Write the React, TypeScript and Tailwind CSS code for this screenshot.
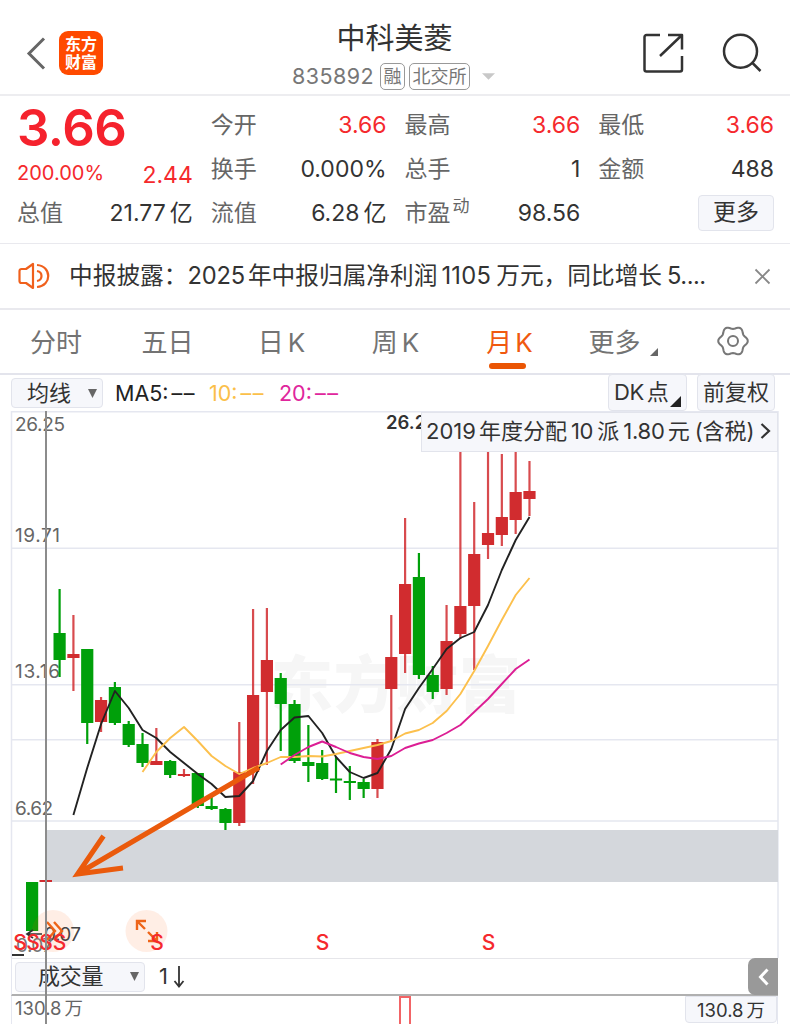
import React from "react";

type Candle = [color: "r" | "g", high: number, low: number, top: number, bottom: number];

const STEP = 13.82;
const FIRST_X = 59.6;
const xAt = (i: number) => FIRST_X + STEP * i;

const candles: Candle[] = [
  ["g", 589, 677, 633, 660],
  ["r", 615, 691, 654, 658],
  ["g", 649, 744, 649, 723],
  ["r", 697, 732, 700, 722],
  ["g", 682, 725, 687, 723],
  ["g", 721, 747, 724, 745],
  ["g", 733, 767, 744, 763],
  ["r", 728, 765, 761, 765],
  ["g", 760, 778, 761, 775],
  ["r", 769, 777, 774, 776],
  ["g", 773, 808, 773, 806],
  ["g", 795, 810, 806, 809],
  ["g", 808, 830, 809, 823],
  ["r", 722, 826, 772, 823],
  ["r", 609, 784, 695, 772],
  ["r", 608, 765, 660, 692],
  ["g", 673, 751, 678, 704],
  ["g", 700, 763, 704, 761],
  ["g", 725, 782, 762, 766],
  ["g", 750, 780, 763, 779],
  ["g", 757, 793, 778.5, 780.5],
  ["g", 766, 800, 781, 783],
  ["g", 779, 798, 782, 789],
  ["r", 739, 798, 742, 789],
  ["r", 615, 740, 657, 689],
  ["r", 518, 673, 584, 654],
  ["g", 553, 679, 577, 675],
  ["g", 666, 699, 675, 692],
  ["r", 605, 695, 641, 689],
  ["r", 440, 639, 606, 634],
  ["r", 502, 670, 554, 606],
  ["r", 440, 559, 533, 545],
  ["r", 454, 546, 517, 535],
  ["r", 440, 534, 492, 520],
  ["r", 461, 516, 491, 499],
];

const ma5 = [815, 768, 724, 691, 708, 730, 738, 752, 763, 774, 784, 797, 796, 781, 751, 730, 717.5, 716, 733, 757, 772, 778, 773, 749, 709, 688, 669, 649, 638, 632, 605, 570, 540, 517];
const ma10 = [772, 752, 738, 727, 741, 756, 766, 774, 768, 763, 757, 757, 756, 756.5, 754, 751, 748, 745, 741, 733.5, 730, 723, 711, 694, 671, 646, 620, 595, 578];
const ma20 = [764.5, 755, 747, 741.5, 747, 753, 757, 759, 756, 748, 743.5, 740, 733, 725, 712, 699, 684, 669, 659.5];

const line = (values: number[], start: number) =>
  values.map((y, i) => `${xAt(i + start).toFixed(1)},${y}`).join(" ");

const gearPath =
  Array.from({ length: 72 }, (_, i) => {
    const a = (i / 72) * Math.PI * 2;
    const r = 12.6 + 1.3 * Math.cos(6 * a);
    return `${i ? "L" : "M"}${(16 + r * Math.cos(a)).toFixed(2)} ${(16 + r * Math.sin(a)).toFixed(2)}`;
  }).join("") + "Z";

function Cell({ label, value, red, sup }: { label: string; value: React.ReactNode; red?: boolean; sup?: string }) {
  return (
    <div className="flex h-11 items-center justify-between">
      <span className="flex text-[#666]">
        {label}
        {sup && <span className="-mt-[7px] ml-0.5 text-[17px]">{sup}</span>}
      </span>
      <span className={red ? "text-[#f5292d]" : "text-[#333]"}>{value}</span>
    </div>
  );
}

function Header() {
  return (
    <header className="flex h-[96px] items-start border-b-2 border-[#ededf0]">
      <div className="flex w-[280px] items-center pt-[31px] pl-[26px]">
        <svg width="20" height="44" viewBox="0 0 20 44" fill="none" stroke="#666" strokeWidth="3">
          <path d="M18 7.500 3 22.500 18 37.500" />
        </svg>
        <div className="ml-[13px] flex size-[44px] flex-col items-center justify-center rounded-[9px] bg-[#ff4a00] text-[16px] leading-[18px] font-bold text-white">
          <span>东方</span>
          <span>财富</span>
        </div>
      </div>
      <div className="flex w-[230px] flex-col items-center">
        <h1 className="mt-[20px] -ml-[1px] text-[29px] leading-[38px] text-[#333]">中科美菱</h1>
        <div className="mt-[4px] -ml-[3px] flex h-[28px] items-center gap-[4px] text-[#777]">
          <span className="mr-[2px] text-[21.500px] tracking-[0.4px]">835892</span>
          <span className="flex h-[27px] w-[25px] items-center justify-center rounded-[5px] border-[1.500px] border-[#999] text-[18px]">融</span>
          <span className="flex h-[27px] w-[61px] items-center justify-center rounded-[5px] border-[1.500px] border-[#999] text-[18px]">北交所</span>
          <svg className="ml-[8px]" width="13" height="7" viewBox="0 0 14 7">
            <path d="M0 0h14L7 7z" fill="#c8c8c8" />
          </svg>
        </div>
      </div>
      <div className="flex flex-1 items-center justify-end gap-[36px] pt-[31px] pr-[27px]">
        <svg width="44" height="44" viewBox="0 0 44 44" fill="none" stroke="#333" strokeWidth="2.500" strokeLinejoin="round">
          <path d="M19 4H5.500a2 2 0 0 0-2 2v32.500a2 2 0 0 0 2 2H39a2 2 0 0 0 2-2V25M27 4h14v14.500M41 4 19 25" />
        </svg>
        <svg width="42" height="44" viewBox="0 0 42 44" fill="none" stroke="#333" strokeWidth="2.500">
          <circle cx="19.500" cy="20.300" r="16.500" />
          <path d="m31 31.500 8.500 8.500" />
        </svg>
      </div>
    </header>
  );
}

function Quote() {
  return (
    <section className="grid h-[147px] grid-cols-4 gap-x-[18px] pt-[7px] pr-[16px] pl-[17px] text-[23px] leading-[44px]">
      <div>
        <div className="h-11 text-[51px] leading-[50px] font-semibold tracking-[-0.5px] text-[#f5222d]">3.66</div>
        <div className="flex h-11 items-center justify-between text-[#f5292d]">
          <span className="pt-[7px] text-[20px]">200.00%</span>
          <span className="pt-[12px]">2.44</span>
        </div>
        <Cell label="总值" value={<>21.77<span className="ml-1">亿</span></>} />
      </div>
      <div>
        <Cell label="今开" value="3.66" red />
        <Cell label="换手" value="0.000%" />
        <Cell label="流值" value={<>6.28<span className="ml-1">亿</span></>} />
      </div>
      <div>
        <Cell label="最高" value="3.66" red />
        <Cell label="总手" value="1" />
        <Cell label="市盈" value="98.56" sup="动" />
      </div>
      <div>
        <Cell label="最低" value="3.66" red />
        <Cell label="金额" value="488" />
        <div className="flex h-11 items-center justify-end">
          <button className="flex h-[36px] w-[76px] items-center justify-center rounded-[4px] border border-[#e2e4ec] bg-[#f6f7fb] pb-[2px] text-[#333]">更多</button>
        </div>
      </div>
    </section>
  );
}

function Notice() {
  return (
    <section className="flex h-[67px] items-center border-t border-b-2 border-[#e9e9ee] pr-[19px] pl-[17px] text-[23.700px] text-[#333]">
      <svg width="34" height="30" viewBox="0 0 34 30" fill="none" stroke="#f0601c" strokeWidth="2.200" strokeLinejoin="round">
        <path d="M16 3v24l-7-5H4.500a2 2 0 0 1-2-2V10a2 2 0 0 1 2-2H9zM20 10c6 1 6 9 0 10M20 4c15 1 15 21 0 22" />
      </svg>
      <p className="ml-[18px] flex flex-1 whitespace-nowrap">
        <span>中报披露：</span>
        <span className="tracking-[-0.2px]">2025</span>
        <span className="ml-[3px]">年中报归属净利润</span>
        <span className="ml-[4px] tracking-[0.3px]">1105</span>
        <span className="ml-[5px]">万元，同比增长</span>
        <span className="ml-[5px] tracking-[-0.500px]">5....</span>
      </p>
      <svg width="17" height="17" viewBox="0 0 17 17" stroke="#888" strokeWidth="1.800">
        <path d="m1.500 1.500 14 14m0-14-14 14" />
      </svg>
    </section>
  );
}

function Tabs() {
  const base = "flex h-full w-[114px] items-center justify-center pr-[3px]";
  return (
    <nav className="flex h-[65px] border-b-2 border-[#e3e4ec] pt-px text-[26px] text-[#737373]">
      <div className="flex h-full w-[112px] items-center justify-center">分时</div>
      <div className={base}>五日</div>
      <div className={base}>日<span className="ml-[4px]">K</span></div>
      <div className={base}>周<span className="ml-[4px]">K</span></div>
      <div className={`${base} relative text-[#f0590f]`}>
        月<span className="ml-[3px]">K</span>
        <span className="absolute bottom-[4px] left-[35px] h-[6px] w-[37px] rounded-full bg-[#ea5504]" />
      </div>
      <div className="flex h-full w-[110px] items-center justify-center gap-[9px]">
        更多
        <svg className="mt-[19px]" width="8" height="8"><path d="M8 0v8H0z" fill="#666" /></svg>
      </div>
      <div className="flex flex-1 items-center justify-center pr-[2px] pb-[2px]">
        <svg width="34" height="34" viewBox="0 0 32 32" fill="none" stroke="#777" strokeWidth="1.900">
          <path d={gearPath} />
          <circle cx="16" cy="16" r="4.700" />
        </svg>
      </div>
    </nav>
  );
}

function Toolbar() {
  const button = "flex items-center rounded-[4px] border border-[#e2e4ec] bg-[#f6f7fb] text-[22px] text-[#333]";
  const dashes = "ml-[3px] tracking-[1.500px]";
  return (
    <section className="flex h-[36px] items-center pr-[15px] pl-[11px] text-[21.500px]">
      <div className={`${button} h-[30px] w-[92px] justify-between pr-[5px] pl-[15px]`}>
        均线
        <svg width="9" height="9"><path d="M0 0h9L4.500 9z" fill="#666" /></svg>
      </div>
      <span className="ml-[12px] flex w-[94px] text-[#222]">MA5:<span className={dashes}>––</span></span>
      <span className="flex w-[70px] text-[#fbbf4a]">10:<span className={dashes}>––</span></span>
      <span className="flex flex-1 text-[#e0269c]">20:<span className={dashes}>––</span></span>
      <div className={`${button} -mt-[1px] mr-[10px] h-[37px] w-[79px] pl-[5px]`}>
        <span className="tracking-[-0.5px]">DK</span><span className="ml-[3px]">点</span>
        <svg className="mt-[18px] ml-[1px]" width="11" height="11"><path d="M11 0v11H0z" fill="#222" /></svg>
      </div>
      <div className={`${button} -mt-[1px] h-[37px] w-[78px] justify-center`}>前复权</div>
    </section>
  );
}

const axisLabels: [string, number, number][] = [
  ["26.25", 431, 50],
  ["19.71", 542, 45],
  ["13.16", 678, 45],
  ["6.62", 815, 38],
];

function Chart() {
  return (
    <svg className="block" width="790" height="547" viewBox="0 411 790 547" fontFamily="Inter, 'Noto Sans CJK SC', sans-serif">
      <text x="271" y="708" fontSize="62" fontWeight="900" fill="#f6f6f6" textLength="250">东方财富</text>
      <g stroke="#e5e7f0" strokeWidth="1.500">
        <path d="M11.500 411v547M778 411v547M11 411.700H778M12 548.200H778M12 684.800H778M12 739.800H778M12 821H778" />
      </g>
      <rect x="46" y="830" width="732" height="52" fill="#d4d7dc" />
      {axisLabels.map(([label, y, w]) => (
        <text key={label} x="15" y={y} fontSize="19" fill="#666" textLength={w}>{label}</text>
      ))}
      <text x="386" y="429" fontSize="18.500" fontWeight="600" fill="#333">26.25</text>
      {candles.map(([color, high, low, top, bottom], i) => (
        <g key={i} fill={color === "r" ? "#d12c2f" : "#00a00a"}>
          <rect x={xAt(i) - 1.1} y={high} width="2.200" height={low - high} opacity={color === "r" ? 0.85 : 1} />
          <rect x={xAt(i) - 6.1} y={top} width="12.200" height={bottom - top} />
        </g>
      ))}
      <rect x="26" y="882" width="12.200" height="49" fill="#00a00a" />
      <rect x="39.500" y="880" width="12.500" height="2" fill="#d12c2f" />
      <g fill="none" strokeWidth="1.900" strokeLinejoin="round">
        <polyline points={line(ma5, 1)} stroke="#222" />
        <polyline points={line(ma10, 6)} stroke="#fcc04d" />
        <polyline points={line(ma20, 16)} stroke="#dc1e94" />
      </g>
      <path d="M259 767.500 79 873M103.500 836 77.500 874 123 868" fill="none" stroke="#ea5a0c" strokeWidth="5" />
      <circle cx="53" cy="931" r="21" fill="#ff5a00" opacity="0.1" />
      <circle cx="146.500" cy="931" r="21" fill="#ff5a00" opacity="0.1" />
      <path d="M27 934h15M33 930l-6 4 6 4" fill="none" stroke="#333" strokeWidth="1.700" />
      <path d="M12 955h12" stroke="#333" strokeWidth="2" />
      <text x="44" y="941" fontSize="19" fill="#444" textLength="37">0.07</text>
      <text x="16" y="952" fontSize="19" fill="#777" textLength="37">0.07</text>
      <g fill="none" stroke="#ee6418" strokeWidth="2.400">
        <path d="m47 922 8 9-8 9M54 922l8 9-8 9" />
        <path d="M137 930v-9h9M137 921l8 8M157 932v9h-9M157 941l-9-9" />
      </g>
      <g fontSize="21" fontWeight="500" fill="#f5292d" textAnchor="middle">
        {[20, 33, 46, 59.5, 157, 322.5, 488.5].map((x) => (
          <text key={x} x={x} y="949.500">S</text>
        ))}
      </g>
    </svg>
  );
}

export default function App() {
  return (
    <main className="h-[1024px] w-[790px] overflow-hidden bg-white font-['Inter','Noto_Sans_CJK_SC',sans-serif]">
      <Header />
      <Quote />
      <Notice />
      <Tabs />
      <Toolbar />
      <div className="relative h-[613px]">
        <Chart />
        <div className="absolute top-[1px] left-[421px] flex h-[40px] w-[357px] items-center border border-[#e2e4ec] bg-[#f6f7fb] pb-[2px] pl-[4px] text-[22px] whitespace-nowrap text-[#333]">
          <span>2019</span>
          <span className="ml-[3px]">年度分配</span>
          <span className="ml-[4px] tracking-[-0.3px]">10</span>
          <span className="ml-[4px]">派</span>
          <span className="ml-[4px] tracking-[-0.2px]">1.80</span>
          <span className="ml-[3px]">元</span>
          <span className="ml-[5px] tracking-[-0.1px]">(含税)</span>
          <svg className="ml-[6px]" width="11" height="18" viewBox="0 0 11 18" fill="none" stroke="#333" strokeWidth="2.200">
            <path d="m1.500 2 7.500 7-7.500 7" />
          </svg>
        </div>
        <div className="mr-[12px] ml-[11px] flex h-[38px] items-center border-t border-b-2 border-t-[#e6e6ea] border-b-[#b0b0b0] border-l border-l-[#e5e7f0]">
          <div className="ml-[3px] flex h-[30px] w-[130px] items-center justify-between rounded-[4px] border border-[#e2e4ec] bg-[#f6f7fb] pr-[5px] pl-[22px] text-[22px] text-[#333]">
            <span className="tracking-[-0.3px]">成交量</span>
            <svg width="9" height="9"><path d="M0 0h9L4.500 9z" fill="#666" /></svg>
          </div>
          <span className="ml-[14px] flex-none text-[22px] text-[#333]">1</span>
          <svg className="ml-[5px]" width="12" height="22" viewBox="0 0 12 22" fill="none" stroke="#333" strokeWidth="1.800">
            <path d="M6 0v20M1.500 15 6 20.500l4.500-5.500" />
          </svg>
          <div className="ml-auto flex h-[37px] w-[30px] items-center justify-center rounded-l-[7px] bg-[#999]">
            <svg width="11" height="18" viewBox="0 0 11 18" fill="none" stroke="#fff" strokeWidth="3">
              <path d="M9.500 1.500 2.500 9l7 7.500" />
            </svg>
          </div>
        </div>
        <div className="mr-[12px] ml-[11px] flex h-[28px] items-start border-x border-[#e5e7f0] text-[18px] leading-[24px]">
          <span className="w-[386px] pl-[3px] text-[18.500px] text-[#666]">130.8<span className="ml-[3px]">万</span></span>
          <svg width="14" height="28" fill="none" stroke="#f26466" strokeWidth="2">
            <path d="M2 30V1h10v29" />
          </svg>
          <div className="ml-auto flex h-[27px] w-[92px] items-center justify-center rounded-b-[4px] border border-[#e2e4ec] bg-[#f6f7fb] text-[18.500px] text-[#333]">
            130.8<span className="ml-[3px]">万</span>
          </div>
        </div>
        <div className="absolute top-0 left-[45px] h-full w-[2px] bg-[#8c8c8c]" />
      </div>
    </main>
  );
}
